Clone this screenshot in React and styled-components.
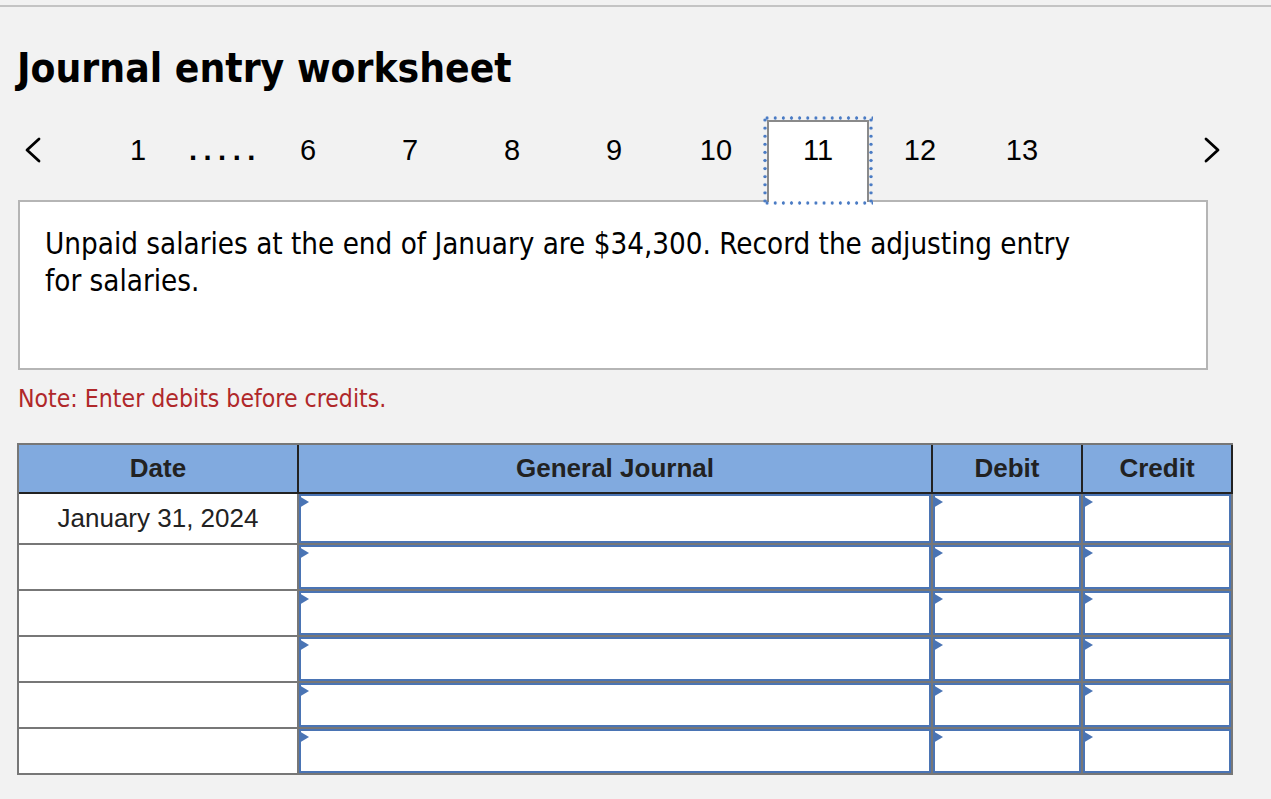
import React from "react";
import styled, { createGlobalStyle, css } from "styled-components";

const GlobalStyle = createGlobalStyle`
  html, body { margin: 0; padding: 0; background: #f2f2f2; }
  body { font-family: "Liberation Sans", Arial, sans-serif; color: #000; }
  * { box-sizing: border-box; }
`;

const Page = styled.div`
  margin-top: 5px;
  border-top: 2px solid #c4c4c4;
  padding: 0 0 24px 17px;
  min-height: 792px;
`;

const Title = styled.h1`
  margin: 39px 0 0 0;
  font-family: "DejaVu Sans Condensed", "DejaVu Sans", sans-serif;
  font-weight: bold;
  font-size: 40.4px;
  line-height: 44px;
  color: #000;
`;

const Nav = styled.nav`
  display: flex;
  align-items: flex-start;
  height: 82px;
  margin: 30px 0 -2px 0;
  padding-right: 50px;
  position: relative;
  z-index: 1;
`;

const Arrow = styled.button`
  border: 0;
  background: transparent;
  padding: 17px 0 0 ${(p) => (p.$side === "left" ? "7px" : "0")};
  margin-left: ${(p) => (p.$side === "right" ? "auto" : "0")};
  width: ${(p) => (p.$side === "left" ? "70px" : "18px")};
  height: 82px;
  display: flex;
  align-items: flex-start;
  cursor: pointer;
`;

const dot = "radial-gradient(circle, #4a7bc4 1.4px, transparent 1.9px)";

const Step = styled.div`
  position: relative;
  width: ${(p) => (p.$narrow ? "68px" : "102px")};
  height: 82px;
  text-align: center;
  font-family: "Liberation Sans", Arial, sans-serif;
  font-size: 29px;
  line-height: 60px;
  color: #000;
  ${(p) =>
    p.$active &&
    css`
      line-height: 56px;
      background: #fff;
      border: 2px solid #8a8a8a;
      border-bottom: 0;
      &::after {
        content: "";
        position: absolute;
        left: -6px;
        right: -6px;
        top: -6px;
        bottom: -3px;
        pointer-events: none;
        background: ${dot} left top / 8.15px 4px repeat-x,
          ${dot} left bottom / 8.15px 4px repeat-x,
          ${dot} left top / 4px 8.1px repeat-y,
          ${dot} right top / 4px 8.1px repeat-y;
      }
    `}
`;

const Dots = styled.span`
  font-weight: bold;
  letter-spacing: 6.5px;
`;

const Prompt = styled.div`
  margin-left: 1px;
  width: 1190px;
  height: 170px;
  border: 2px solid #b5b5b5;
  background: #fff;
  padding: 24px 0 0 25px;
`;

const PromptText = styled.p`
  margin: 0;
  max-width: 1050px;
  font-family: "DejaVu Sans Condensed", "DejaVu Sans", sans-serif;
  font-size: 29.3px;
  line-height: 37px;
  color: #000;
`;

const Note = styled.p`
  margin: 14px 0 0 1px;
  font-family: "DejaVu Sans Condensed", "DejaVu Sans", sans-serif;
  font-size: 24.6px;
  line-height: 30px;
  color: #b0282a;
`;

const Table = styled.div`
  margin-top: 29px;
  display: grid;
  grid-template-columns: 280px 634px 150px 150px;
  width: 1216px;
  border-left: 2px solid #777;
  border-top: 2px solid #777;
`;

const HeadCell = styled.div`
  height: 49px;
  background: #81aadf;
  border-right: 2px solid #222;
  border-bottom: 2px solid #222;
  display: flex;
  align-items: center;
  justify-content: center;
  font-family: "Liberation Sans", Arial, sans-serif;
  font-weight: bold;
  font-size: 26px;
  color: #222;
`;

const Cell = styled.div`
  height: ${(p) => (p.$first ? "51px" : "46px")};
  background: #fff;
  border-right: 2px solid #777;
  border-bottom: 2px solid #777;
  display: flex;
  align-items: center;
  justify-content: center;
  font-family: "Liberation Sans", Arial, sans-serif;
  font-size: 26px;
  color: #222;
`;

const Entry = styled.div`
  position: relative;
  width: 100%;
  height: 100%;
  border: 2px solid #4a74b4;
  background: #fff;
  &::before {
    content: "";
    position: absolute;
    left: -2px;
    top: 0;
    border-left: 10px solid #4a74b4;
    border-top: 6px solid transparent;
    border-bottom: 6px solid transparent;
  }
`;

function Chevron({ dir }) {
  return (
    <svg width="18" height="26" viewBox="0 0 18 26" fill="none">
      <polyline
        points={dir === "left" ? "15,2 3,13 15,24" : "3,2 15,13 3,24"}
        stroke="#000"
        strokeWidth="2.8"
        strokeLinecap="round"
        strokeLinejoin="round"
      />
    </svg>
  );
}

const steps = ["1", "dots", "6", "7", "8", "9", "10", "11", "12", "13"];

export default function App() {
  const rows = [0, 1, 2, 3, 4, 5];
  return (
    <>
      <GlobalStyle />
      <Page>
        <Title>Journal entry worksheet</Title>
        <Nav>
          <Arrow $side="left" aria-label="Previous">
            <Chevron dir="left" />
          </Arrow>
          {steps.map((s) =>
            s === "dots" ? (
              <Step key={s} $narrow>
                <Dots>.....</Dots>
              </Step>
            ) : (
              <Step key={s} $active={s === "11"}>
                {s}
              </Step>
            )
          )}
          <Arrow $side="right" aria-label="Next">
            <Chevron dir="right" />
          </Arrow>
        </Nav>
        <Prompt>
          <PromptText>
            Unpaid salaries at the end of January are $34,300. Record the adjusting entry for salaries.
          </PromptText>
        </Prompt>
        <Note>Note: Enter debits before credits.</Note>
        <Table>
          <HeadCell>Date</HeadCell>
          <HeadCell>General Journal</HeadCell>
          <HeadCell>Debit</HeadCell>
          <HeadCell>Credit</HeadCell>
          {rows.map((r) => (
            <React.Fragment key={r}>
              <Cell $first={r === 0}>{r === 0 ? "January 31, 2024" : ""}</Cell>
              <Cell $first={r === 0}>
                <Entry />
              </Cell>
              <Cell $first={r === 0}>
                <Entry />
              </Cell>
              <Cell $first={r === 0}>
                <Entry />
              </Cell>
            </React.Fragment>
          ))}
        </Table>
      </Page>
    </>
  );
}
